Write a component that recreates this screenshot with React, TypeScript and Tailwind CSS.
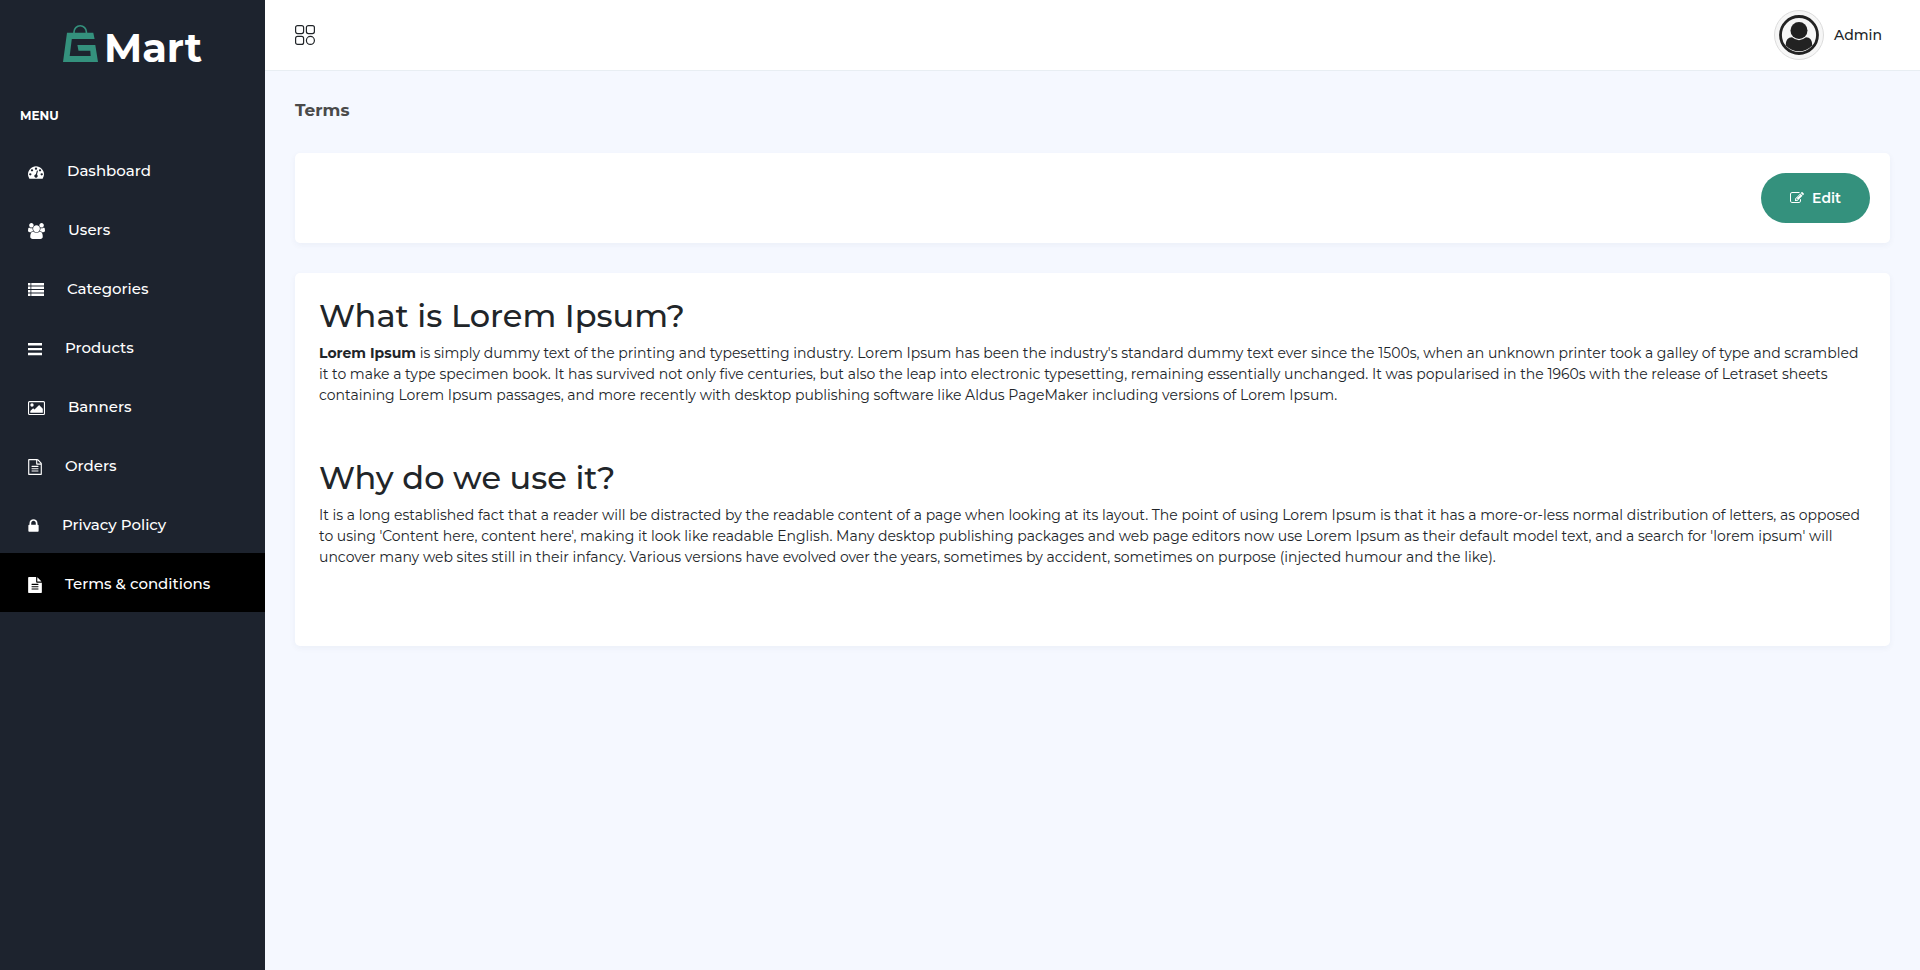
import React from "react";

type IconProps = { box: string; width: number; d: string; height?: number };

function Glyph({ box, width, d, height = 16 }: IconProps) {
  return (
    <svg viewBox={box} width={width} height={height} fill="currentColor" className="shrink-0" aria-hidden="true">
      <path fillRule="evenodd" d={d} />
    </svg>
  );
}

const items: { label: string; box: string; width: number; d: string; active?: boolean }[] = [
  {
    label: "Dashboard",
    box: "0 0 1792 1792",
    width: 16,
    d: "M384 1152q0-53-37.5-90.5t-90.5-37.5-90.5 37.5-37.5 90.5 37.5 90.5 90.5 37.5 90.5-37.5 37.5-90.5zm192-448q0-53-37.5-90.5t-90.5-37.5-90.5 37.5-37.5 90.5 37.5 90.5 90.5 37.5 90.5-37.5 37.5-90.5zm428 481l101-382q6-26-7.5-48.5t-38.5-29.5-48 6.5-30 39.5l-101 382q-60 5-107 43.5t-63 98.5q-20 77 20 146t117 89 146-20 89-117q16-60-6-117t-72-91zm660-33q0-53-37.5-90.5t-90.5-37.5-90.5 37.5-37.5 90.5 37.5 90.5 90.5 37.5 90.5-37.5 37.5-90.5zm-640-640q0-53-37.5-90.5t-90.5-37.5-90.5 37.5-37.5 90.5 37.5 90.5 90.5 37.5 90.5-37.5 37.5-90.5zm448 192q0-53-37.5-90.5t-90.5-37.5-90.5 37.5-37.5 90.5 37.5 90.5 90.5 37.5 90.5-37.5 37.5-90.5zm320 448q0 261-141 483-19 29-54 29h-1402q-35 0-54-29-141-221-141-483 0-182 71-348t191-286 286-191 348-71 348 71 286 191 191 286 71 348z",
  },
  {
    label: "Users",
    box: "-64 0 1920 1792",
    width: 17,
    d: "M529 896q-162 5-265 128h-134q-82 0-138-40.5t-56-118.5q0-353 124-353 6 0 43.5 21t97.5 42.5 119 21.5q67 0 133-23-5 37-5 66 0 139 81 256zm1071 637q0 120-73 189.5t-194 69.5h-874q-121 0-194-69.5t-73-189.5q0-53 3.5-103.5t14-109 26.5-108.5 43-97.5 62-81 85.5-53.5 111.5-20q10 0 43 21.5t73 48 107 48 135 21.5 135-21.5 107-48 73-48 43-21.5q61 0 111.5 20t85.5 53.5 62 81 43 97.5 26.5 108.5 14 109 3.5 103.5zm-1024-1277q0 106-75 181t-181 75-181-75-75-181 75-181 181-75 181 75 75 181zm704 384q0 159-112.5 271.5t-271.5 112.5-271.5-112.5-112.5-271.5 112.5-271.5 271.5-112.5 271.5 112.5 112.5 271.5zm576 225q0 78-56 118.5t-138 40.5h-134q-103-123-265-128 81-117 81-256 0-29-5-66 66 23 133 23 59 0 119-21.5t97.5-42.5 43.5-21q124 0 124 353zm-128-609q0 106-75 181t-181 75-181-75-75-181 75-181 181-75 181 75 75 181z",
  },
  {
    label: "Categories",
    box: "0 0 16 16",
    width: 16,
    d: "M0 1h2.500v2.500H0zM3.300 1H16v2.500H3.300zM0 4.500h2.500v2.500H0zM3.300 4.500H16v2.500H3.300zM0 8h2.500v2.500H0zM3.300 8H16v2.500H3.300zM0 11.500h2.500v2.500H0zM3.300 11.500H16v2.500H3.300z",
  },
  {
    label: "Products",
    box: "0 0 14 16",
    width: 14,
    d: "M0 2h14v2.400H0zM0 6.900h14v2.400H0zM0 11.800h14v2.400H0z",
  },
  {
    label: "Banners",
    box: "0 0 17 16",
    width: 17,
    d: "M1.500 1h14A1.500 1.500 0 0 1 17 2.500V13.500A1.500 1.500 0 0 1 15.500 15H1.500A1.500 1.500 0 0 1 0 13.500V2.500A1.500 1.500 0 0 1 1.500 1zM1.500 2.200Q1.100 2.200 1.100 2.500V13.500Q1.100 13.900 1.500 13.900H15.500Q15.900 13.900 15.900 13.500V2.500Q15.900 2.200 15.500 2.200zM4 3.300A1.700 1.700 0 1 1 4 6.700A1.700 1.700 0 1 1 4 3.300zM2.300 12.700V11L5.100 8.200L6.500 9.600L11.100 5L14.800 8.700V12.700z",
  },
  {
    label: "Orders",
    box: "128 0 1536 1792",
    width: 14,
    d: "M1596 380q28 28 48 76t20 88v1152q0 40-28 68t-68 28h-1344q-40 0-68-28t-28-68v-1600q0-40 28-68t68-28h896q40 0 88 20t76 48zm-444-244v376h376q-10-29-22-41l-313-313q-12-12-41-22zm384 1528v-1024h-416q-40 0-68-28t-28-68v-416h-768v1536h1280zm-1024-864q0-14 9-23t23-9h704q14 0 23 9t9 23v64q0 14-9 23t-23 9h-704q-14 0-23-9t-9-23v-64zm736 224q14 0 23 9t9 23v64q0 14-9 23t-23 9h-704q-14 0-23-9t-9-23v-64q0-14 9-23t23-9h704zm0 256q14 0 23 9t9 23v64q0 14-9 23t-23 9h-704q-14 0-23-9t-9-23v-64q0-14 9-23t23-9h704z",
  },
  {
    label: "Privacy Policy",
    box: "320 0 1152 1792",
    width: 11,
    d: "M640 768h512v-192q0-106-75-181t-181-75-181 75-75 181v192zm832 96v576q0 40-28 68t-68 28h-960q-40 0-68-28t-28-68v-576q0-40 28-68t68-28h32v-192q0-184 132-316t316-132 316 132 132 316v192h32q40 0 68 28t28 68z",
  },
  {
    label: "Terms & conditions",
    box: "128 0 1536 1792",
    width: 14,
    active: true,
    d: "M1596 476q14 14 28 36h-472v-472q22 14 36 28zm-476 164h544v1056q0 40-28 68t-68 28h-1344q-40 0-68-28t-28-68v-1600q0-40 28-68t68-28h800v544q0 40 28 68t68 28zm160 736v-64q0-14-9-23t-23-9h-704q-14 0-23 9t-9 23v64q0 14 9 23t23 9h704q14 0 23-9t9-23zm0-256v-64q0-14-9-23t-23-9h-704q-14 0-23 9t-9 23v64q0 14 9 23t23 9h704q14 0 23-9t9-23zm0-256v-64q0-14-9-23t-23-9h-704q-14 0-23 9t-9 23v64q0 14 9 23t23 9h704q14 0 23-9t9-23z",
  },
];

const EDIT =
  "M888 1184l116-116-152-152-116 116v56h96v96h56zm440-720q-16-16-33 1l-350 350q-17 17-1 33t33-1l350-350q17-17 1-33zm80 594v190q0 119-84.5 203.5t-203.5 84.5h-832q-119 0-203.5-84.5t-84.5-203.5v-832q0-119 84.5-203.5t203.5-84.5h832q63 0 117 25 15 7 18 23 3 17-9 29l-49 49q-14 14-32 8-23-6-45-6h-832q-66 0-113 47t-47 113v832q0 66 47 113t113 47h832q66 0 113-47t47-113v-126q0-13 9-22l64-64q15-15 35-7t20 29zm-96-738l288 288-672 672h-288v-288zm444 132l-92 92-288-288 92-92q28-28 68-28t68 28l152 152q28 28 28 68t-28 68z";

function Sidebar() {
  return (
    <aside className="w-[265px] shrink-0 bg-[#1d232e] text-white">
      <a href="#" className="flex h-[94px] items-baseline justify-center gap-1.5 pt-[25px]">
        <svg viewBox="0 0 35 37" width="35" height="37" aria-hidden="true" className="shrink-0">
          <path d="M11 9V7a6.200 6.200 0 0 1 12.400 0v2" fill="none" stroke="#34917d" strokeWidth="1.600" />
          <path
            d="M4 7.700H30.300L31.600 14H8.800L6.700 31H27.700L27.300 25.700H15.500L14.400 20H32.300L35 37H0z"
            fill="#34917d"
          />
        </svg>
        <span className="text-[40px] leading-none font-bold">Mart</span>
      </a>
      <p className="px-5 pt-3 pb-3.5 text-xs leading-5 font-bold">MENU</p>
      <nav>
        {items.map((it) => (
          <a
            key={it.label}
            href="#"
            className={
              it.active
                ? "flex h-[59px] items-center gap-[23px] bg-black px-7 pt-1 text-[15px] font-medium"
                : "flex h-[59px] items-center gap-[23px] px-7 pt-1 text-[15px] font-medium"
            }
          >
            <Glyph box={it.box} width={it.width} d={it.d} />
            {it.label}
          </a>
        ))}
      </nav>
    </aside>
  );
}

export default function App() {
  return (
    <div className="flex min-h-screen bg-[#f5f8ff] font-['Montserrat','Inter',sans-serif] text-[#212529] antialiased">
      <Sidebar />
      <div className="flex min-w-0 flex-1 flex-col">
        <header className="flex h-[71px] items-center justify-between border-b border-[#e8eef3] bg-white pr-[38px] pl-[30px]">
          <button type="button" aria-label="Toggle menu" className="cursor-pointer">
            <svg width="20" height="20" viewBox="0 0 20 20" fill="none" stroke="#212529" strokeWidth="1.200" aria-hidden="true">
              <rect x="0.600" y="0.600" width="8" height="8" rx="2" />
              <rect x="11.400" y="0.600" width="8" height="8" rx="2" />
              <rect x="0.600" y="11.400" width="8" height="8" rx="2" />
              <circle cx="15.400" cy="15.400" r="4" />
            </svg>
          </button>
          <a href="#" className="flex items-center gap-2.5 text-sm font-medium">
            <svg width="50" height="50" viewBox="0 0 50 50" aria-hidden="true">
              <circle cx="25" cy="25" r="24.500" fill="#f6f6f6" stroke="#dcdcdc" />
              <circle cx="25" cy="25" r="18.500" fill="#f6f6f6" stroke="#222" strokeWidth="2.800" />
              <path d="M11.800 35.500C11.800 30 14 27.300 18 27.300Q25 33 32 27.300C36 27.300 38.200 30 38.200 35.500A18 18 0 0 1 11.800 35.500z" fill="#222" />
              <circle cx="25" cy="20.600" r="8.500" fill="#222" />
            </svg>
            Admin
          </a>
        </header>
        <main className="flex flex-col gap-[30px] px-[30px] pt-[27px] pb-7">
          <h1 className="text-[17px] leading-[25px] font-bold text-[#4a4a4a]">Terms</h1>
          <section className="flex justify-end rounded-[5px] bg-white p-5 shadow-[0_2px_6px_rgba(40,60,90,0.05)]">
            <button
              type="button"
              className="flex h-[50px] cursor-pointer items-center gap-2 rounded-full bg-[#34917d] px-[29px] text-sm font-semibold text-white"
            >
              <Glyph box="0 0 1792 1792" width={14} height={14} d={EDIT} />
              Edit
            </button>
          </section>
          <article className="rounded-[5px] bg-white px-6 pt-6 pb-[78px] shadow-[0_2px_6px_rgba(40,60,90,0.05)]">
            <h2 className="mb-2 text-[32px] leading-[38px] font-medium">What is Lorem Ipsum?</h2>
            <p className="text-sm leading-[21px]">
              <strong className="font-bold">Lorem Ipsum</strong> is simply dummy text of the printing and typesetting
              industry. Lorem Ipsum has been the industry's standard dummy text ever since the 1500s, when an unknown
              printer took a galley of type and scrambled it to make a type specimen book. It has survived not only five
              centuries, but also the leap into electronic typesetting, remaining essentially unchanged. It was
              popularised in the 1960s with the release of Letraset sheets containing Lorem Ipsum passages, and more
              recently with desktop publishing software like Aldus PageMaker including versions of Lorem Ipsum.
            </p>
            <h2 className="mt-[53px] mb-2 text-[32px] leading-[38px] font-medium">Why do we use it?</h2>
            <p className="text-sm leading-[21px]">
              It is a long established fact that a reader will be distracted by the readable content of a page when
              looking at its layout. The point of using Lorem Ipsum is that it has a more-or-less normal distribution of
              letters, as opposed to using 'Content here, content here', making it look like readable English. Many
              desktop publishing packages and web page editors now use Lorem Ipsum as their default model text, and a
              search for 'lorem ipsum' will uncover many web sites still in their infancy. Various versions have evolved
              over the years, sometimes by accident, sometimes on purpose (injected humour and the like).
            </p>
          </article>
        </main>
      </div>
    </div>
  );
}
